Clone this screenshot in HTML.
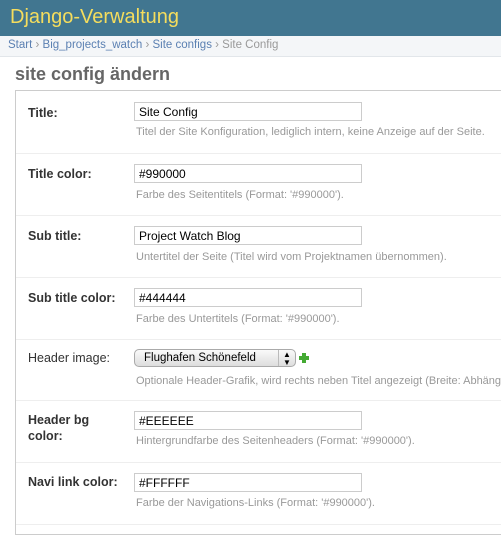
<!DOCTYPE html>
<html><head><meta charset="utf-8"><style>
*{box-sizing:border-box}
html,body{margin:0;width:501px;height:529px;overflow:hidden;background:#fff;font-family:"Liberation Sans","DejaVu Sans",sans-serif;}
#hd{position:absolute;left:0;top:0;width:501px;height:36px;background:#417690;}
#hd span{position:absolute;left:10px;top:6px;font-size:20px;color:#f5dd5d;}
#bc{position:absolute;left:0;top:36px;width:501px;height:21px;background:#f4f6f8;border-bottom:1px solid #e2e6ea;font-size:11.5px;color:#999;padding:3px 0 0 8px;}
#bc a{color:#5b80b2;text-decoration:none}
h1{position:absolute;left:15px;top:64px;margin:0;font-size:18px;color:#666;font-weight:bold;}
#fs{position:absolute;left:15px;top:90px;width:520px;height:445px;border:1px solid #ccc;}
.row{position:absolute;left:16px;width:490px;border-bottom:1px solid #eee;}
.lab{position:absolute;left:12px;font-size:12.5px;font-weight:bold;color:#333;line-height:16px;width:90px}
.lab.n{font-weight:normal;color:#333;width:110px}
.inp{position:absolute;left:118px;width:228px;height:19px;border:1px solid #ccc;font-size:12px;padding:3px 0 0 4px;color:#000;line-height:13px}
.help{position:absolute;left:120px;font-size:11px;color:#999;white-space:nowrap}
</style></head><body>
<div id="hd"><span>Django-Verwaltung</span></div>
<div id="bc"><a>Start</a> › <a>Big_projects_watch</a> › <a>Site configs</a> › Site Config</div>
<h1>site config ändern</h1>
<div id="fs"></div>

<div class="row" style="top:91px;height:63px"><div class="lab" style="top:14px">Title:</div><div class="inp" style="top:11px">Site Config</div><div class="help" style="top:35px">Titel der Site Konfiguration, lediglich intern, keine Anzeige auf der Seite.</div></div>
<div class="row" style="top:154px;height:62px"><div class="lab" style="top:12px">Title color:</div><div class="inp" style="top:10px">#990000</div><div class="help" style="top:35px">Farbe des Seitentitels (Format: '#990000').</div></div>
<div class="row" style="top:216px;height:62px"><div class="lab" style="top:12px">Sub title:</div><div class="inp" style="top:10px">Project Watch Blog</div><div class="help" style="top:35px">Untertitel der Seite (Titel wird vom Projektnamen übernommen).</div></div>
<div class="row" style="top:278px;height:62px"><div class="lab" style="top:12px">Sub title color:</div><div class="inp" style="top:10px">#444444</div><div class="help" style="top:35px">Farbe des Untertitels (Format: '#990000').</div></div>
<div class="row" style="top:340px;height:61px"><div class="lab n" style="top:10px">Header image:</div>
<div style="position:absolute;left:118px;top:9px;width:162px;height:18px;border:1px solid #aaa;border-radius:5px;background:linear-gradient(#fafafa,#ddd);font-size:11.5px;padding:2px 0 0 9px">Flughafen Schönefeld<span style="position:absolute;right:0;top:0;width:17px;height:16px;border-left:1px solid #bbb;font-size:8px;text-align:center;line-height:8px;padding-top:1px">▲<br>▼</span></div>
<div style="position:absolute;left:283px;top:13px;width:10px;height:10px"><div style="position:absolute;left:3px;top:0;width:4px;height:10px;background:#4a3"></div><div style="position:absolute;left:0;top:3px;width:10px;height:4px;background:#4a3"></div></div>
<div class="help" style="top:35px">Optionale Header-Grafik, wird rechts neben Titel angezeigt (Breite: Abhängig</div></div>
<div class="row" style="top:401px;height:62px"><div class="lab" style="top:11px">Header bg color:</div><div class="inp" style="top:10px">#EEEEEE</div><div class="help" style="top:34px">Hintergrundfarbe des Seitenheaders (Format: '#990000').</div></div>
<div class="row" style="top:463px;height:62px"><div class="lab" style="top:11px">Navi link color:</div><div class="inp" style="top:10px">#FFFFFF</div><div class="help" style="top:34px">Farbe der Navigations-Links (Format: '#990000').</div></div>
</body></html>
